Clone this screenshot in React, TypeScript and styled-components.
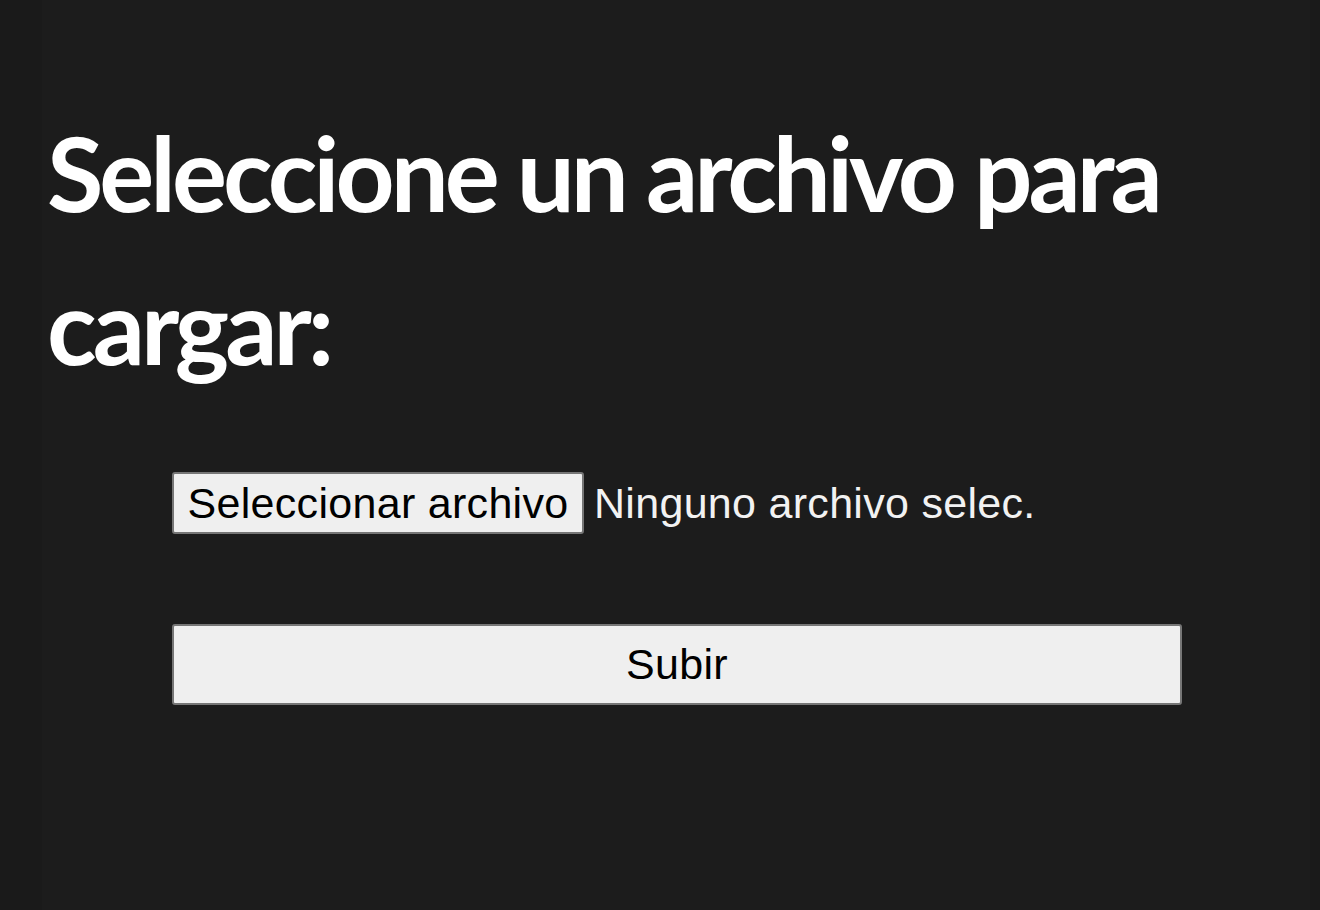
import React from "react";
import styled, { createGlobalStyle } from "styled-components";

const GlobalStyle = createGlobalStyle`
  html, body {
    margin: 0;
    padding: 0;
    background: #1a1a1a;
  }
  * { box-sizing: border-box; }
`;

const Page = styled.div`
  margin: 0 10px 0 42px;
  min-height: 910px;
  background: #1c1c1c;
  padding: 96px 5px 0 5px;
`;

const Heading = styled.h1`
  margin: 0;
  font-family: Lato, "Open Sans", sans-serif;
  font-weight: 700;
  font-size: 103px;
  line-height: 153px;
  letter-spacing: -4px;
  color: #ffffff;
`;

const Form = styled.form`
  margin: 70px 123px 0 125px;
  display: flex;
  flex-direction: column;
  gap: 90px;
`;

const FileRow = styled.label`
  display: flex;
  align-items: center;
  gap: 10px;
  font-family: "Liberation Sans", Arial, sans-serif;
  font-size: 43px;
  letter-spacing: 0.3px;
  color: #f2f2f2;
  cursor: pointer;
`;

const HiddenInput = styled.input`
  display: none;
`;

const PickButton = styled.span`
  display: inline-flex;
  align-items: center;
  justify-content: center;
  width: 412px;
  height: 62px;
  background: #efefef;
  color: #000;
  border: 2px solid #767676;
  border-radius: 3px;
`;

const SubmitButton = styled.button`
  width: 1010px;
  height: 81px;
  background: #efefef;
  color: #000;
  border: 2px solid #767676;
  border-radius: 3px;
  font-family: "Liberation Sans", Arial, sans-serif;
  font-size: 43px;
  letter-spacing: 0.3px;
  cursor: pointer;
`;

export default function App() {
  return (
    <>
      <GlobalStyle />
      <Page>
        <Heading>Seleccione un archivo para cargar:</Heading>
        <Form onSubmit={(e) => e.preventDefault()}>
          <FileRow>
            <HiddenInput type="file" />
            <PickButton>Seleccionar archivo</PickButton>
            <span>Ninguno archivo selec.</span>
          </FileRow>
          <SubmitButton type="submit">Subir</SubmitButton>
        </Form>
      </Page>
    </>
  );
}
